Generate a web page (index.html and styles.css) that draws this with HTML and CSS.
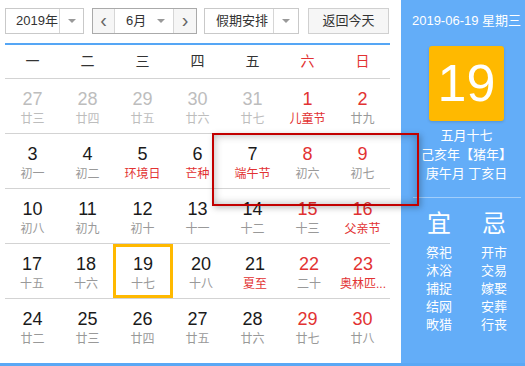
FILE: index.html
```html
<!DOCTYPE html>
<html>
<head>
    <meta charset="UTF-8">
    <title>万年历</title>
    <link rel="stylesheet" href="styles.css">
</head>
<body>
    <div class="calendar">
        <div class="main">
            <div class="controls">
                <div class="select year">
                    <span class="select-text">2019年</span>
                    <span class="select-arrow"><i class="caret"></i></span>
                </div>
                <div class="month-group">
                    <span class="nav">&lsaquo;</span>
                    <span class="month"><span class="select-text">6月</span><i class="caret"></i></span>
                    <span class="nav">&rsaquo;</span>
                </div>
                <div class="select holiday">
                    <span class="select-text">假期安排</span>
                    <span class="select-arrow"><i class="caret"></i></span>
                </div>
                <div class="today-btn">返回今天</div>
            </div>

            <div class="weekdays">
                <span>一</span><span>二</span><span>三</span><span>四</span><span>五</span>
                <span class="red">六</span><span class="red">日</span>
            </div>

            <div class="week">
                <div class="day other"><b>27</b><em>廿三</em></div>
                <div class="day other"><b>28</b><em>廿四</em></div>
                <div class="day other"><b>29</b><em>廿五</em></div>
                <div class="day other"><b>30</b><em>廿六</em></div>
                <div class="day other"><b>31</b><em>廿七</em></div>
                <div class="day weekend fest"><b>1</b><em>儿童节</em></div>
                <div class="day weekend"><b>2</b><em>廿九</em></div>
            </div>
            <div class="week">
                <div class="day"><b>3</b><em>初一</em></div>
                <div class="day"><b>4</b><em>初二</em></div>
                <div class="day fest"><b>5</b><em>环境日</em></div>
                <div class="day fest"><b>6</b><em>芒种</em></div>
                <div class="day fest"><b>7</b><em>端午节</em></div>
                <div class="day weekend"><b>8</b><em>初六</em></div>
                <div class="day weekend"><b>9</b><em>初七</em></div>
            </div>
            <div class="week">
                <div class="day"><b>10</b><em>初八</em></div>
                <div class="day"><b>11</b><em>初九</em></div>
                <div class="day"><b>12</b><em>初十</em></div>
                <div class="day"><b>13</b><em>十一</em></div>
                <div class="day"><b>14</b><em>十二</em></div>
                <div class="day weekend"><b>15</b><em>十三</em></div>
                <div class="day weekend fest"><b>16</b><em>父亲节</em></div>
            </div>
            <div class="week">
                <div class="day"><b>17</b><em>十五</em></div>
                <div class="day"><b>18</b><em>十六</em></div>
                <div class="day today"><b>19</b><em>十七</em></div>
                <div class="day"><b>20</b><em>十八</em></div>
                <div class="day fest"><b>21</b><em>夏至</em></div>
                <div class="day weekend"><b>22</b><em>二十</em></div>
                <div class="day weekend fest"><b>23</b><em>奥林匹...</em></div>
            </div>
            <div class="week last">
                <div class="day"><b>24</b><em>廿二</em></div>
                <div class="day"><b>25</b><em>廿三</em></div>
                <div class="day"><b>26</b><em>廿四</em></div>
                <div class="day"><b>27</b><em>廿五</em></div>
                <div class="day"><b>28</b><em>廿六</em></div>
                <div class="day weekend"><b>29</b><em>廿七</em></div>
                <div class="day weekend"><b>30</b><em>廿八</em></div>
            </div>
        </div>

        <div class="side">
            <div class="side-date">2019-06-19 星期三</div>
            <div class="big-day">19</div>
            <div class="lunar">
                <div>五月十七</div>
                <div>己亥年【猪年】</div>
                <div>庚午月 丁亥日</div>
            </div>
            <div class="yiji">
                <div class="yiji-col">
                    <div class="yiji-title">宜</div>
                    <div>祭祀</div>
                    <div>沐浴</div>
                    <div>捕捉</div>
                    <div>结网</div>
                    <div>畋猎</div>
                </div>
                <div class="yiji-col">
                    <div class="yiji-title">忌</div>
                    <div>开市</div>
                    <div>交易</div>
                    <div>嫁娶</div>
                    <div>安葬</div>
                    <div>行丧</div>
                </div>
            </div>
        </div>

        <!-- 假期高亮框 -->
        <div class="holiday-box"></div>
    </div>
</body>
</html>
```

FILE: styles.css
```css
* {
    margin: 0;
    padding: 0;
    box-sizing: border-box;
    font-family: "Liberation Sans", "Noto Sans CJK SC", sans-serif;
}
body {
    background: white;
}
.calendar {
    position: relative;
    display: flex;
    height: 366px;
    border-bottom: 3px solid #5aa8f5;
}
.main {
    width: 401px;
    padding: 8px 11px 0 5px;
}
.controls {
    display: flex;
    height: 26px;
    font-size: 13px;
    color: #333;
}
.select {
    display: flex;
    border: 1px solid #c9c9c9;
    background: white;
}
.select-text {
    flex: 1;
    padding-left: 10px;
    line-height: 24px;
}
.select-arrow {
    width: 24px;
    border-left: 1px solid #d6d6d6;
    display: flex;
    align-items: center;
    justify-content: center;
}
.caret {
    width: 0;
    height: 0;
    border-left: 4px solid transparent;
    border-right: 4px solid transparent;
    border-top: 4px solid #999;
}
.year {
    width: 79px;
}
.month-group {
    display: flex;
    width: 105px;
    margin-left: 8px;
    border: 1px solid #aaa;
}
.nav {
    width: 21px;
    background: #f6f6f6;
    color: #666;
    font-size: 20px;
    line-height: 22px;
    text-align: center;
}
.nav:last-child {
    flex: 1;
}
.month {
    width: 60px;
    display: flex;
    align-items: center;
    padding-right: 8px;
    border-left: 1px solid #d6d6d6;
    border-right: 1px solid #d6d6d6;
}
.month .select-text {
    padding-left: 11px;
}
.holiday {
    width: 95px;
    margin-left: 7px;
}
.holiday .select-text {
    padding-left: 11px;
}
.holiday .select-arrow {
    width: 25px;
}
.today-btn {
    width: 81px;
    margin-left: 9px;
    border: 1px solid #d0d0d0;
    background: #f6f6f6;
    text-align: center;
    line-height: 24px;
}
.weekdays {
    display: flex;
    margin-top: 9px;
    height: 36px;
    border-top: 2px solid #55a6f5;
    border-bottom: 1px solid #d3d3d3;
    font-size: 14px;
    color: #333;
}
.weekdays span {
    flex: 1;
    text-align: center;
    line-height: 32px;
}
.red {
    color: #e23232;
}
.week {
    display: flex;
    height: 55px;
    border-bottom: 1px solid #d3d3d3;
}
.week.last {
    border-bottom: none;
}
.day {
    flex: 1;
    padding-top: 10px;
    text-align: center;
}
.day b {
    display: block;
    font-weight: normal;
    font-size: 18px;
    line-height: 21px;
    color: #1a1a1a;
}
.day em {
    display: block;
    font-style: normal;
    font-size: 12px;
    line-height: 18px;
    color: #999;
    white-space: nowrap;
}
.day.other b,
.day.other em {
    color: #bdbdbd;
}
.day.weekend b {
    color: #e23232;
}
.day.fest em {
    color: #e23232;
}
.day.today {
    border: 3px solid #ffb900;
    padding-top: 7px;
    margin-right: 1px;
}
.side {
    flex: 1;
    background: #63adf8;
    color: white;
    padding: 11px 0 0 7px;
    display: flex;
    flex-direction: column;
    align-items: center;
}
.side-date {
    font-size: 13px;
    line-height: 20px;
}
.big-day {
    width: 75px;
    height: 75px;
    margin-top: 15px;
    background: #ffb900;
    border-radius: 3px;
    box-shadow: 0 1px 3px rgba(0,0,0,0.15);
    font-size: 52px;
    line-height: 75px;
    text-align: center;
}
.lunar {
    margin-top: 5px;
    font-size: 13px;
    line-height: 19px;
    text-align: center;
    padding-bottom: 14px;
    width: 108px;
    border-bottom: 1px solid rgba(255,255,255,0.4);
}
.yiji {
    display: flex;
    margin-top: 11px;
    font-size: 13px;
    line-height: 18px;
}
.yiji-col {
    width: 55px;
    text-align: center;
}
.yiji-title {
    font-size: 24px;
    line-height: 30px;
    margin-bottom: 5px;
}
.holiday-box {
    position: absolute;
    left: 212px;
    top: 133px;
    width: 207px;
    height: 73px;
    border: 2px solid #c20000;
    box-shadow: inset 0 0 8px rgba(0,0,0,0.3), 2px 2px 6px rgba(0,0,0,0.25);
}
```
